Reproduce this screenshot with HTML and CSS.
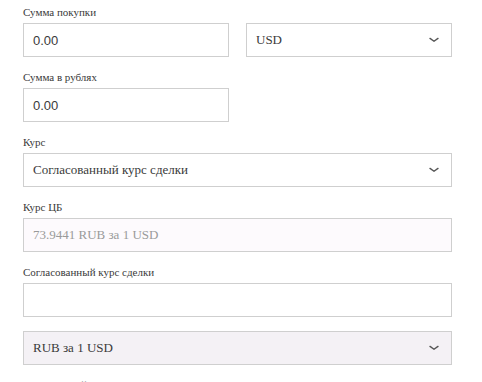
FILE: index.html
```html
<!DOCTYPE html>
<html lang="ru">
<head>
<meta charset="utf-8">
<link rel="stylesheet" href="styles.css">
</head>
<body>
<form class="form">
  <div class="row">
    <div class="field">
      <label class="label">Сумма покупки</label>
      <div class="box"><span class="num">0.00</span></div>
    </div>
    <div class="field">
      <label class="label">&nbsp;</label>
      <div class="box select"><span class="txt">USD</span><svg class="chev" width="10" height="6" viewBox="0 0 10 6"><path d="M1 1.4 L5 4.3 L9 1.4" fill="none" stroke="#555" stroke-width="1.4" stroke-linecap="round" stroke-linejoin="round"/></svg></div>
    </div>
  </div>
  <div class="row">
    <div class="field">
      <label class="label">Сумма в рублях</label>
      <div class="box"><span class="num">0.00</span></div>
    </div>
  </div>
  <div class="field">
    <label class="label">Курс</label>
    <div class="box select"><span class="txt">Согласованный курс сделки</span><svg class="chev" width="10" height="6" viewBox="0 0 10 6"><path d="M1 1.4 L5 4.3 L9 1.4" fill="none" stroke="#555" stroke-width="1.4" stroke-linecap="round" stroke-linejoin="round"/></svg></div>
  </div>
  <div class="field">
    <label class="label">Курс ЦБ</label>
    <div class="box readonly"><span class="txt muted">73.9441 RUB за 1 USD</span></div>
  </div>
  <div class="field">
    <label class="label">Согласованный курс сделки</label>
    <div class="box"></div>
  </div>
  <div class="field">
    <div class="box select disabled"><span class="txt">RUB за 1 USD</span><svg class="chev" width="10" height="6" viewBox="0 0 10 6"><path d="M1 1.4 L5 4.3 L9 1.4" fill="none" stroke="#555" stroke-width="1.4" stroke-linecap="round" stroke-linejoin="round"/></svg></div>
  </div>
  <div class="field">
    <label class="label">Комментарий</label>
    <div class="box"></div>
  </div>
</form>
</body>
</html>
```
FILE: styles.css
```css
html, body {
  margin: 0;
  padding: 0;
  background: #fff;
}
body {
  font-family: "Liberation Serif", "Times New Roman", serif;
  color: #3a3a3a;
}
.form {
  width: 429px;
  padding: 6px 0 0 23px;
  display: flex;
  flex-direction: column;
  gap: 14px;
}
.row {
  display: grid;
  grid-template-columns: 206px 206px;
  column-gap: 17px;
}
.field {
  display: flex;
  flex-direction: column;
}
.label {
  display: block;
  height: 17px;
  font-family: "Liberation Serif", "Times New Roman", serif;
  font-size: 11px;
  line-height: 12px;
  color: #3a3a3a;
}
.box {
  box-sizing: border-box;
  height: 34px;
  border: 1px solid #cfcfcf;
  background: #fff;
  display: flex;
  align-items: center;
  padding: 0 9px;
}
.num {
  font-family: "Liberation Sans", Arial, sans-serif;
  font-size: 13px;
  color: #3a3a3a;
}
.txt {
  font-family: "Liberation Serif", "Times New Roman", serif;
  font-size: 13px;
  color: #3a3a3a;
  flex: 1;
}
.muted {
  color: #9a9a9a;
}
.select {
  padding-right: 12px;
}
.chev {
  display: block;
  flex: none;
}
.readonly {
  background: #fdfafd;
}
.disabled {
  background: #f4f1f5;
}
```
